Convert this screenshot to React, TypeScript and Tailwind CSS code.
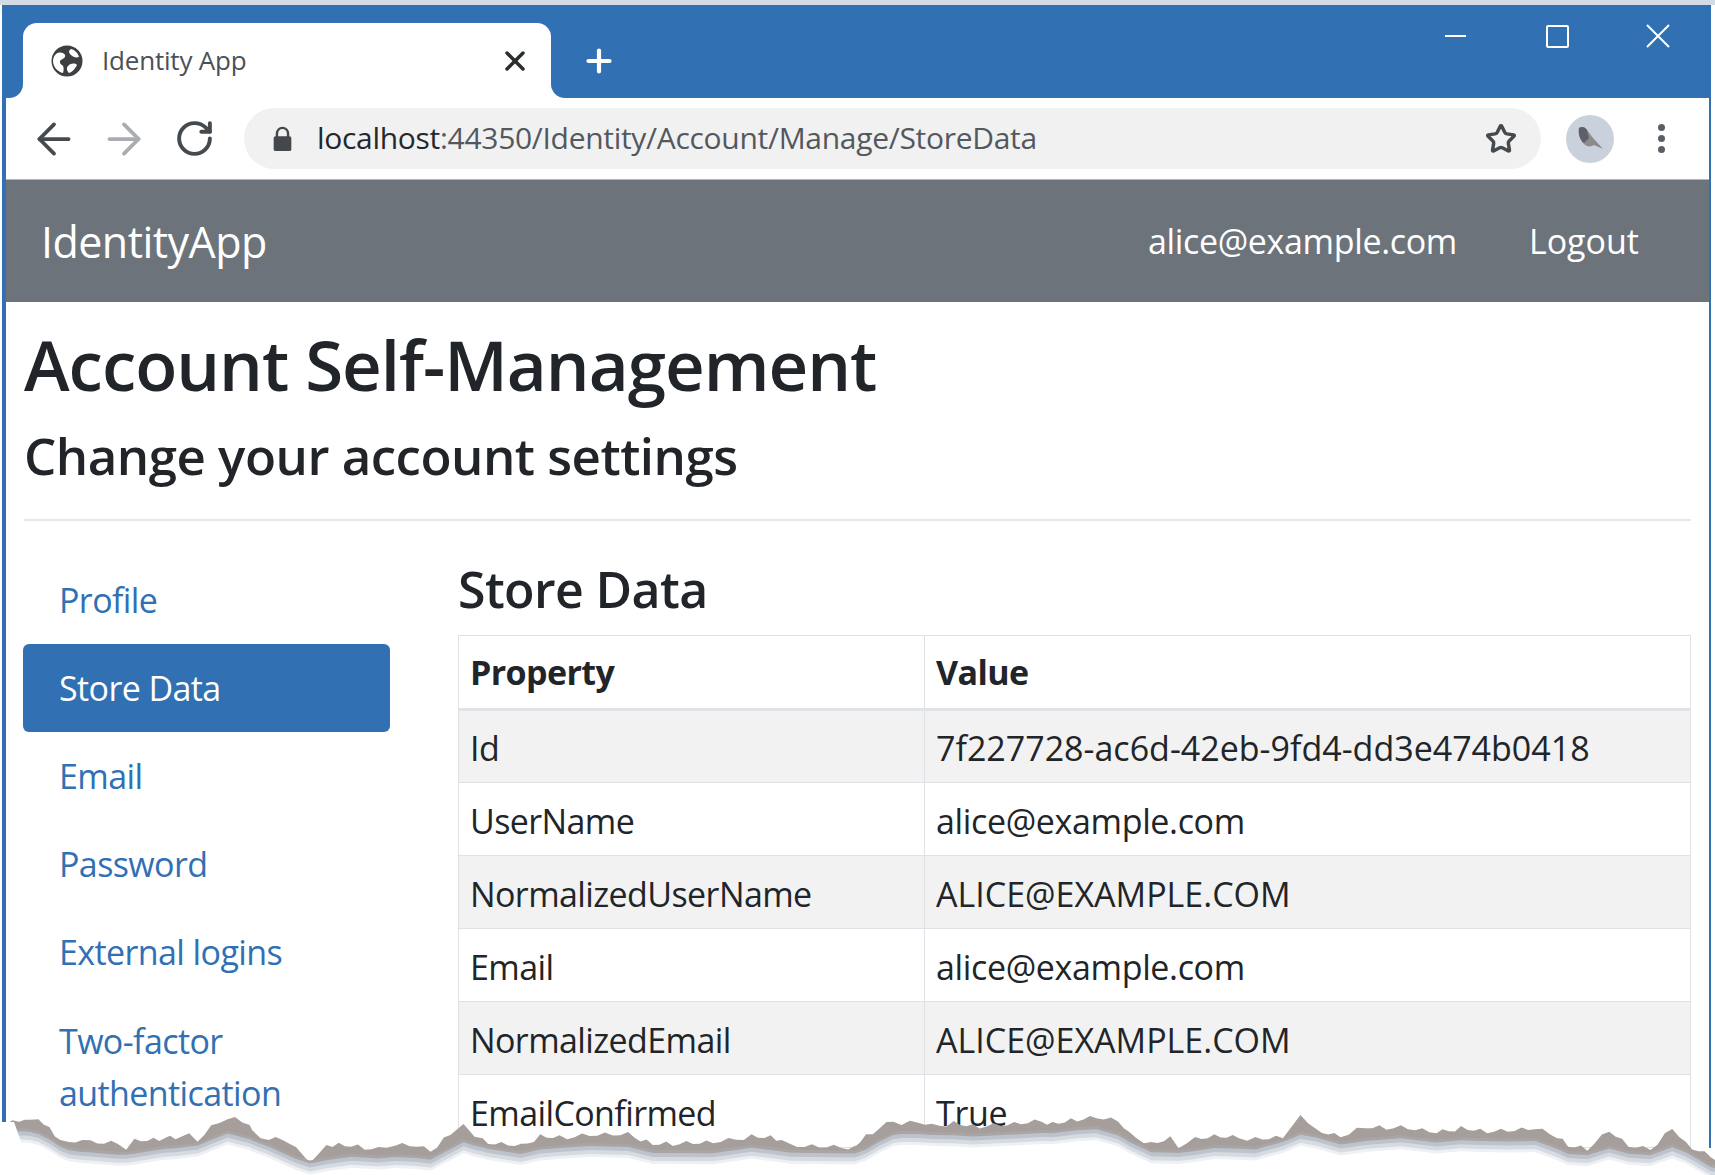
import { ArrowLeft, ArrowRight, RotateCw, Star, X, Plus } from "lucide-react";

const A: [number, number][] = [[10,225],[35,215],[45,205],[55,218],[70,208],[90,240],[110,270],[125,285],[150,270],[165,280],[215,282],[230,295],[245,275],[280,272],[300,265],[320,268],[345,250],[360,275],[385,235],[415,203],[455,225],[460,250],[490,270],[515,270],[540,292],[565,340],[595,285],[640,290],[690,300],[720,287],[760,290],[785,305],[845,222],[865,260],[880,265],[890,282],[950,290],[985,262],[1020,265],[1075,258],[1145,255],[1190,285],[1300,280],[1370,262],[1405,265],[1425,270],[1440,290],[1560,295]];
const B: [number, number][] = [[0,290],[20,262],[45,235],[70,215],[85,225],[115,218],[140,230],[180,222],[215,232],[290,225],[340,215],[360,225],[405,210],[440,205],[480,215],[500,255],[540,285],[575,268],[590,290],[620,270],[655,262],[700,265],[730,270],[780,265],[812,195],[840,245],[885,262],[900,250],[930,235],[995,235],[1060,250],[1105,237],[1140,245],[1190,245],[1240,238],[1280,260],[1300,290],[1335,298],[1375,245],[1410,290],[1450,300],[1490,237],[1515,285],[1560,322]];
const base: [number, number][] = [
  [0, 1122],
  ...A.map(([x, y]) => [x / 1.823, 1050 + y / 3] as [number, number]),
  ...B.map(([x, y]) => [855 + x / 1.823, 1050 + y / 3] as [number, number]),
  [1715, 1160],
];
function teeth(pts: [number, number][]): [number, number][] {
  const out: [number, number][] = [];
  let k = 0;
  for (let i = 0; i < pts.length - 1; i++) {
    const [x0, y0] = pts[i];
    const [x1, y1] = pts[i + 1];
    const n = Math.max(1, Math.round((x1 - x0) / 7));
    for (let j = 0; j < n; j++) {
      const t = j / n;
      k++;
      const d = Math.abs(y1 - y0) / (x1 - x0 || 1) > 1 ? 0 : k % 3 === 0 ? -3 : k % 5 === 0 ? 1.5 : 0;
      out.push([x0 + (x1 - x0) * t, y0 + (y1 - y0) * t + d]);
    }
  }
  out.push(pts[pts.length - 1]);
  return out;
}
function smooth(pts: [number, number][], r: number): [number, number][] {
  return pts.map(([x], i) => {
    let s = 0, n = 0;
    for (const [px, py] of pts) {
      const w = Math.max(0, r - Math.abs(px - x));
      s += py * w; n += w;
    }
    return [x, n ? s / n : pts[i][1]];
  });
}
const poly = (pts: [number, number][], off: number) =>
  pts.map(([x, y]) => `${x.toFixed(1)},${(y + off).toFixed(1)}`).join(" ") + " 1715,1175 0,1175";

function Tear() {
  const s = smooth(base, 32);
  return (
    <svg className="absolute left-0 top-0" width="1715" height="1175" viewBox="0 0 1715 1175">
      <polygon points={poly(teeth(base), 0)} fill="#a59e9b" />
      <polygon points={poly(s, 7)} fill="#a9a5a5" />
      <polygon points={poly(s, 10)} fill="#bcc3cd" />
      <polygon points={poly(s, 14)} fill="#d6dbe2" />
      <polygon points={poly(s, 18)} fill="#eef0f3" />
      <polygon points={poly(s, 21)} fill="#ffffff" />
      <polygon points="0,1122 14,1122 24,1150 24,1175 0,1175" fill="#ffffff" />
    </svg>
  );
}

const rows: [string, string, boolean][] = [
  ["Id", "7f227728-ac6d-42eb-9fd4-dd3e474b0418", true],
  ["UserName", "alice@example.com", false],
  ["NormalizedUserName", "ALICE@EXAMPLE.COM", true],
  ["Email", "alice@example.com", false],
  ["NormalizedEmail", "ALICE@EXAMPLE.COM", true],
  ["EmailConfirmed", "True", false],
];
const links = ["Profile", "Store Data", "Email", "Password", "External logins"];

export default function App() {
  return (
    <div className="relative h-[1175px] w-[1715px] overflow-hidden bg-white font-['Open_Sans',sans-serif] text-[#212529]">
      <div className="h-[5px] bg-[#d3dbe6]" />
      <div className="ml-[2px] mr-[4px] border-l-[4px] border-r-[2px] border-[#3070b3]">
        {/* title bar */}
        <div className="relative flex h-[93px] items-end bg-[#3070b3] pl-[17px]">
          <div className="relative flex h-[75px] w-[528px] items-center rounded-t-[14px] bg-white pl-[28px] pr-[20px]">
            <span className="absolute bottom-0 left-[-14px] h-[14px] w-[14px] bg-white">
              <span className="block h-full w-full rounded-br-[14px] bg-[#3070b3]" />
            </span>
            <span className="absolute bottom-0 right-[-14px] h-[14px] w-[14px] bg-white">
              <span className="block h-full w-full rounded-bl-[14px] bg-[#3070b3]" />
            </span>
            <svg width="32" height="32" viewBox="0 0 32 32">
              <circle cx="16" cy="16" r="15.5" fill="#3c4043" />
              <path d="M5 9c4-3 8-1 9 1s-2 4-4 5-1 4 1 5 2 5 1 8c-5-1-10-6-10-12 0-3 1-5 3-7ZM20 4c4 1 7 4 8 8-3 1-6 0-8-2s-3-4 0-6ZM17 21c3-3 7-3 9-1-2 4-5 7-8 8-2-2-3-5-1-7Z" fill="#ffffff" />
            </svg>
            <span className="ml-[19px] flex-1 text-[26px] tracking-[-0.2px] text-[#4b5056]">Identity App</span>
            <X size={32} strokeWidth={2.6} className="text-[#2b2e31]" />
          </div>
          <Plus size={36} strokeWidth={2.8} className="mb-[19px] ml-[30px] text-white" />
          <div className="absolute right-[39px] top-[19px] flex items-center">
            <span className="block h-[2px] w-[21px] bg-white" />
            <span className="ml-[80px] block h-[23px] w-[23px] rounded-[2px] border-2 border-white" />
            <svg className="ml-[77px]" width="24" height="24" viewBox="0 0 24 24">
              <path d="M1 1 23 23M23 1 1 23" stroke="#ffffff" strokeWidth="2" fill="none" />
            </svg>
          </div>
        </div>
        {/* toolbar */}
        <div className="flex h-[82px] items-center border-b border-[#b4b8bc] pl-[13px] pr-[36px]">
          <div className="flex w-[70px] justify-center">
            <ArrowLeft size={50} strokeWidth={1.8} className="text-[#454a4f]" />
          </div>
          <div className="flex w-[70px] justify-center">
            <ArrowRight size={50} strokeWidth={1.8} className="text-[#a9adb1]" />
          </div>
          <div className="flex w-[70px] justify-center">
            <RotateCw size={41} strokeWidth={2.3} className="text-[#454a4f]" />
          </div>
          <div className="ml-[15px] flex h-[61px] w-[1297px] items-center rounded-full bg-[#f1f1f1] pl-[29px] pr-[24px]">
            <svg width="19" height="26" viewBox="0 0 20 28">
              <path d="M4 12V8a6 6 0 0 1 12 0v4" fill="none" stroke="#44484d" strokeWidth="2.6" />
              <rect x="0.5" y="11" width="19" height="16" rx="2" fill="#44484d" />
            </svg>
            <span className="ml-[25px] mt-[-2px] flex-1 text-[30px] tracking-[-0.3px] text-[#53585e]">
              <span className="text-[#25282b]">localhost</span>:44350/Identity/Account/Manage/StoreData
            </span>
            <Star size={32} strokeWidth={2.6} className="text-[#454a4f]" />
          </div>
          <div className="ml-[25px] flex h-[48px] w-[48px] items-center justify-center rounded-full bg-[#c9d2dc]">
            <svg width="30" height="28" viewBox="0 0 30 28">
              <path d="M4 3c3-2 6-1 8 2l6 8 10 11-9-4c-3 2-7 2-10-1C5 15 3 9 4 3Z" fill="#8d8a8c" />
              <path d="M4 3c3-2 6-1 8 2l2 8-5 5C5 15 3 9 4 3Z" fill="#5d6068" />
            </svg>
          </div>
          <div className="ml-[44px] flex flex-col gap-[4px]">
            <span className="block h-[7px] w-[7px] rounded-full bg-[#5a5f65]" />
            <span className="block h-[7px] w-[7px] rounded-full bg-[#5a5f65]" />
            <span className="block h-[7px] w-[7px] rounded-full bg-[#5a5f65]" />
          </div>
        </div>
        {/* navbar */}
        <div className="flex h-[122px] items-center justify-between bg-[#6c737b] pl-[35px] pr-[70px] text-white">
          <span className="mt-[3px] text-[43px] tracking-[-0.55px]">IdentityApp</span>
          <div className="mt-[1px] flex gap-[72px] text-[34px] tracking-[-0.35px]">
            <span>alice@example.com</span>
            <span className="tracking-normal">Logout</span>
          </div>
        </div>
        {/* page */}
        <div className="px-[18px]">
          <h1 className="mt-[16px] text-[69px] font-semibold leading-[92px] tracking-[-1px]">Account Self-Management</h1>
          <h2 className="mt-[14px] text-[51px] font-semibold leading-[62px] tracking-[-0.5px]">Change your account settings</h2>
          <hr className="mt-[33px] border-t-2 border-[#e8e8e8]" />
          <div className="mt-[35px] flex">
            <div className="ml-[-1px] w-[367px] shrink-0 text-[34px] tracking-[-0.6px] text-[#3070b3]">
              {links.map((l) => (
                <div key={l} className={l === "Store Data" ? "flex h-[88px] items-center rounded-[6px] bg-[#3070b3] pl-[36px] text-white" : "flex h-[88px] items-center pl-[36px]"}>
                  {l}
                </div>
              ))}
              <div className="pl-[36px] pt-[19px] leading-[52px]">Two-factor<br />authentication</div>
            </div>
            <div className="ml-[68px] flex-1">
              <h3 className="mb-[13px] text-[50px] font-semibold leading-[66px] tracking-[-0.6px]">Store Data</h3>
              <table className="w-full border-collapse text-[34px] tracking-[-0.35px]">
                <thead>
                  <tr className="h-[74px] border-b-[3px] border-[#dfe3e8]">
                    <th className="w-[466px] border border-[#dee2e6] px-[11px] text-left font-bold tracking-[-0.6px]">Property</th>
                    <th className="border border-[#dee2e6] px-[11px] text-left font-bold tracking-[-0.6px]">Value</th>
                  </tr>
                </thead>
                <tbody>
                  {rows.map(([k, v, wide], i) => (
                    <tr key={k} className={i % 2 === 0 ? "h-[73px] bg-[#f2f2f2]" : "h-[73px]"}>
                      <td className="border border-[#dee2e6] px-[11px] pt-[4px] tracking-[-0.6px]">{k}</td>
                      <td className={wide ? "border border-[#dee2e6] px-[11px] pt-[4px] tracking-normal" : "border border-[#dee2e6] px-[11px] pt-[4px]"}>{v}</td>
                    </tr>
                  ))}
                </tbody>
              </table>
            </div>
          </div>
        </div>
      </div>
      <Tear />
    </div>
  );
}
